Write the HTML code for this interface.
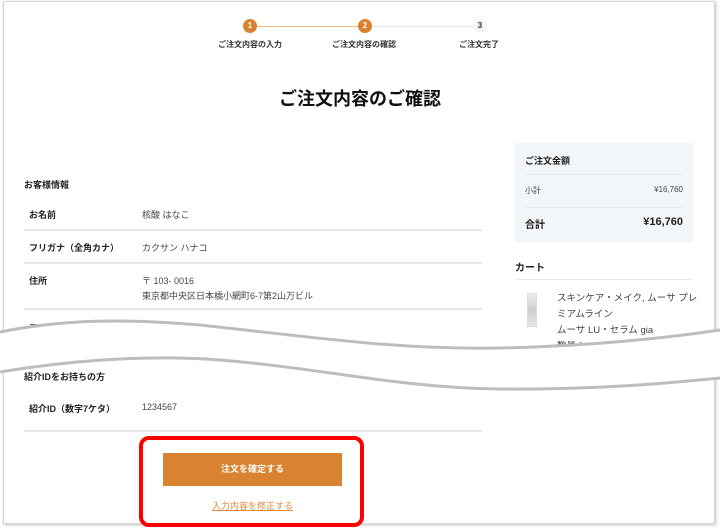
<!DOCTYPE html>
<html><head><meta charset="utf-8"><style>
body{margin:0;width:720px;height:530px;background:#fff;position:relative;overflow:hidden;font-family:"Liberation Sans","Noto Sans CJK JP",sans-serif;color:#222}
.frame{position:absolute;left:3px;top:1px;width:710px;height:521px;border:1px solid #d4d4d4;box-shadow:1px 1px 3px rgba(0,0,0,.25);background:#fff}
.a{position:absolute;white-space:nowrap}
.b{font-weight:bold}
.hl{position:absolute;height:1px;background:#e8e8e8}
.c{position:absolute;width:14px;height:14px;border-radius:50%;font-size:8px;font-weight:bold;line-height:14px;text-align:center}
.s{font-size:8px;font-weight:bold;color:#333}
.t{font-size:9px}
</style></head><body>
<div class="frame"></div>
<div style="position:absolute;left:257px;top:26px;width:102px;height:1px;background:#f0b987"></div>
<div style="position:absolute;left:372px;top:26px;width:102px;height:1px;background:#e4e6ea"></div>
<div class="c" style="left:243px;top:19px;background:#d9822f;color:#fff">1</div>
<div class="c" style="left:358px;top:19px;background:#d9822f;color:#fff">2</div>
<div class="c" style="left:473px;top:19px;background:#f2f4f7;color:#333">3</div>
<div class="a s" style="left:218px;top:39px">ご注文内容の入力</div>
<div class="a s" style="left:332px;top:39px">ご注文内容の確認</div>
<div class="a s" style="left:459px;top:39px">ご注文完了</div>
<div class="a b" style="left:0;width:720px;text-align:center;top:85px;font-size:18px;color:#111">ご注文内容のご確認</div>
<div class="a b t" style="left:24px;top:178px">お客様情報</div>
<div class="a b t" style="left:29px;top:208px">お名前</div><div class="a t" style="left:142px;top:208px;color:#444">核酸 はなこ</div>
<div class="hl" style="left:24px;width:458px;top:229px;height:2px"></div>
<div class="a b t" style="left:29px;top:241px">フリガナ（全角カナ）</div><div class="a t" style="left:142px;top:241px;color:#444">カクサン ハナコ</div>
<div class="hl" style="left:24px;width:458px;top:262px;height:2px"></div>
<div class="a b t" style="left:29px;top:274px">住所</div><div class="a t" style="left:142px;top:274px;color:#444">〒 103- 0016</div>
<div class="a t" style="left:142px;top:289px;color:#444">東京都中央区日本橋小網町6-7第2山万ビル</div>
<div class="hl" style="left:24px;width:458px;top:308px;height:2px"></div>
<div class="a b t" style="left:29px;top:322px">電話番号</div>
<div class="a b t" style="left:24px;top:370px">紹介IDをお持ちの方</div>
<div class="a b t" style="left:29px;top:402px">紹介ID（数字7ケタ）</div><div class="a t" style="left:142px;top:402px;color:#444">1234567</div>
<div class="hl" style="left:24px;width:458px;top:430px;height:2px"></div>
<div style="position:absolute;left:163px;top:453px;width:179px;height:33px;background:#d9822f;color:#fff;font-size:9px;font-weight:bold;text-align:center;line-height:33px">注文を確定する</div>
<div class="a t" style="left:0;width:505px;text-align:center;top:499px;color:#e08a40;text-decoration:underline">入力内容を修正する</div>
<div style="position:absolute;left:139px;top:436px;width:217px;height:83px;border:4px solid #f00;border-radius:10px"></div>
<div style="position:absolute;left:515px;top:143px;width:178px;height:99px;background:#f3f6f9"></div>
<div class="a b t" style="left:525px;top:154px">ご注文金額</div>
<div class="hl" style="left:525px;width:158px;top:174px"></div>
<div class="a" style="left:525px;top:185px;font-size:8px;color:#444">小計</div><div class="a" style="right:37px;top:185px;font-size:8px;color:#444">¥16,760</div>
<div class="hl" style="left:525px;width:158px;top:207px"></div>
<div class="a b t" style="left:525px;top:216px;font-size:10px">合計</div><div class="a b" style="right:37px;top:216px;font-size:11px">¥16,760</div>
<div class="a b" style="left:515px;top:259px;font-size:10px">カート</div>
<div class="hl" style="left:515px;width:178px;top:279px"></div>
<div style="position:absolute;left:527px;top:293px;width:8px;height:32px;background:linear-gradient(#eee,#ccc,#e8e8e8);border:1px solid #ddd"></div>
<div class="a" style="left:557px;top:290px;font-size:9.5px;color:#444">スキンケア・メイク, ムーサ プレ</div>
<div class="a" style="left:557px;top:306px;font-size:9.5px;color:#444">ミアムライン</div>
<div class="a" style="left:557px;top:322px;font-size:9.5px;color:#444">ムーサ LU・セラム gia</div>
<div class="a" style="left:557px;top:338px;font-size:9.5px;color:#444">数量：1 ¥30,000</div>
<svg width="720" height="530" style="position:absolute;left:0;top:0">
<path d="M0,332 C60,320 120,318 200,325 C320,338 400,350 500,348 C600,346 680,336 720,330 L720,378 C680,382 600,390 500,389 C400,388 320,368 220,360 C140,354 60,362 0,372 Z" fill="#fff"/>
<path d="M0,332 C60,320 120,318 200,325 C320,338 400,350 500,348 C600,346 680,336 720,330" fill="none" stroke="#bdbdbd" stroke-width="3"/>
<path d="M0,372 C60,362 140,354 220,360 C320,368 400,388 500,389 C600,390 680,382 720,378" fill="none" stroke="#bdbdbd" stroke-width="3"/>
</svg>
</body></html>
